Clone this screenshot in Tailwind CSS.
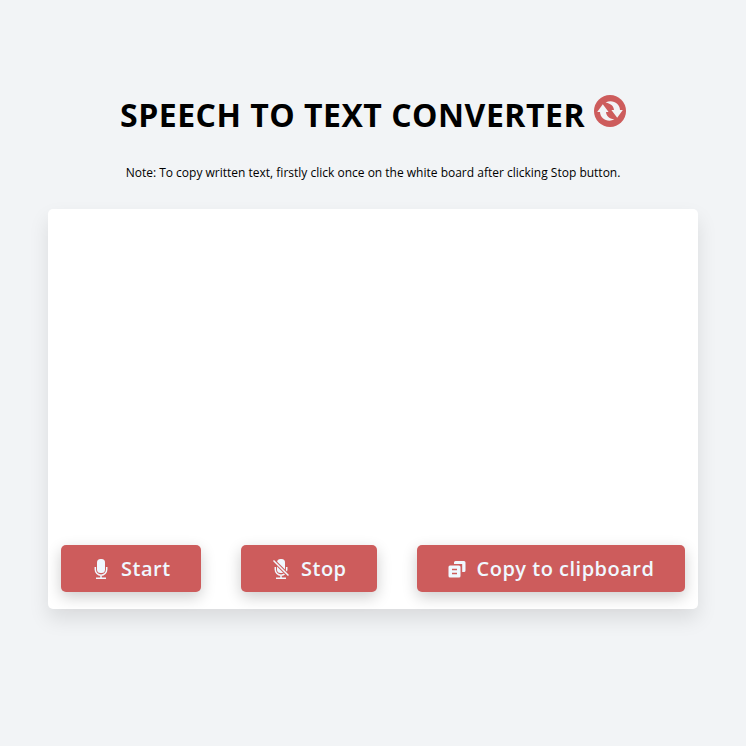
<!DOCTYPE html>
<html lang="en"><head><meta charset="utf-8"><title>Speech to Text Converter</title>
<script src="https://cdn.jsdelivr.net/npm/@tailwindcss/browser@4"></script></head>
<body class="h-[746px] overflow-hidden bg-[#f2f4f6] font-['Open_Sans',sans-serif] text-black">
<main class="flex flex-col items-center pt-[92px]">
<h1 class="flex h-[46px] items-center gap-[9px] whitespace-nowrap text-[32px] font-bold tracking-[0.5px]"><span>SPEECH TO TEXT CONVERTER</span>
<svg class="mb-2 size-8" viewBox="0 0 32 32"><circle cx="16" cy="16" r="16" fill="#cd5c5c"/><path d="M3.200 17 8.800 9.200l5.800 7.800h-2.600c.2 3.700 2.800 6.500 8.400 7.600C13.500 27.800 6.200 23.800 6 17zM28.800 15l-5.600 7.800-5.800-7.800h2.600c-.2-3.700-2.800-6.500-8.400-7.600C18.500 4.200 25.800 8.200 26 15z" fill="#f2f4f6"/></svg></h1>
<p class="mt-[26px] h-[18px] whitespace-nowrap text-[12px] leading-[18px]">Note: To copy written text, firstly click once on the white board after clicking Stop button.</p>
<section class="mt-[27px] flex h-[400px] w-[650px] items-end justify-between rounded-[5px] bg-white px-[13px] pb-[17px] shadow-[0_10px_20px_rgba(0,0,0,0.1)]">
<button class="flex h-[47px] w-[140px] items-center gap-[10px] whitespace-nowrap rounded-[5px] bg-[#cd5c5c] pl-[30px] text-[20px] font-semibold tracking-[0.5px] text-[#f0f8ff] shadow-[0_5px_15px_rgba(0,0,0,0.2)]"><svg class="size-5" viewBox="0 0 20 20" fill="none" stroke="currentColor" stroke-width="1.500"><rect x="6" y="0" width="8" height="14" rx="3.500" fill="currentColor" stroke="none"/><path d="M4.300 8v2.500a5.700 5.700 0 0 0 11.400 0V8M10 16.200v3M5 19.250h10"/></svg>Start</button>
<button class="flex h-[47px] w-[136px] items-center gap-[10px] whitespace-nowrap rounded-[5px] bg-[#cd5c5c] pl-[30px] text-[20px] font-semibold tracking-[0.5px] text-[#f0f8ff] shadow-[0_5px_15px_rgba(0,0,0,0.2)]"><svg class="size-5" viewBox="0 0 20 20" fill="none" stroke="currentColor" stroke-width="1.500"><rect x="6" y="0" width="8" height="14" rx="3.500" fill="currentColor" stroke="none"/><path d="M4.300 8v2.500a5.700 5.700 0 0 0 11.400 0V8M10 16.200v3M5 19.250h10"/><path d="M2.500 1.500 17.500 16.500" stroke="#cd5c5c" stroke-width="3.600"/><path d="M2.500 1.500 17.500 16.500" stroke-width="1.500"/></svg>Stop</button>
<button class="flex h-[47px] w-[268px] items-center gap-[9.5px] whitespace-nowrap rounded-[5px] bg-[#cd5c5c] pl-[30px] text-[20px] font-semibold tracking-[0.5px] text-[#f0f8ff] shadow-[0_5px_15px_rgba(0,0,0,0.2)]"><svg class="size-5" viewBox="0 0 20 20" fill="currentColor"><path d="M8.500 2H17a1.500 1.500 0 0 1 1.500 1.500v8A1.500 1.500 0 0 1 17 13h-1.800V5H7V3.500A1.500 1.500 0 0 1 8.500 2z"/><rect x="1.500" y="6.500" width="12" height="12" rx="1.500"/><path d="M5 10.500h5M5 14.500h5" stroke="#cd5c5c" stroke-width="1.300"/></svg>Copy to clipboard</button>
</section></main></body></html>
